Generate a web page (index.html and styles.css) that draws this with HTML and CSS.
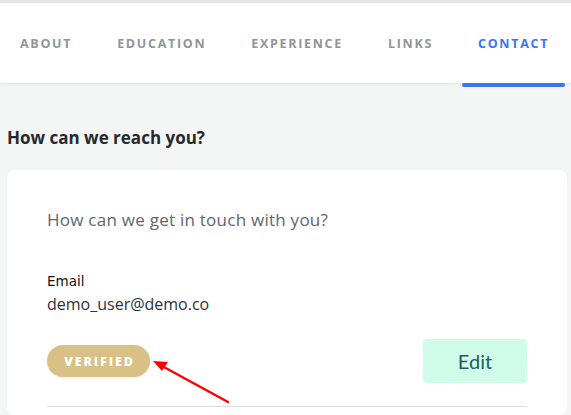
FILE: index.html
```html
<!DOCTYPE html>
<html lang="en">
<head>
<meta charset="utf-8">
<title>Contact</title>
<link rel="stylesheet" href="styles.css">
</head>
<body>
<div class="topstrip"></div>
<nav class="tabs">
  <a class="tab">ABOUT</a>
  <a class="tab">EDUCATION</a>
  <a class="tab">EXPERIENCE</a>
  <a class="tab">LINKS</a>
  <a class="tab active">CONTACT</a>
</nav>
<main class="content">
  <h2 class="title">How can we reach you?</h2>
  <section class="card">
    <p class="lead">How can we get in touch with you?</p>
    <div class="field">
      <div class="label">Email</div>
      <div class="value">demo_user@demo.co</div>
    </div>
    <div class="actions">
      <span class="badge">VERIFIED</span>
      <button class="edit">Edit</button>
    </div>
    <hr class="sep">
  </section>
</main>
<svg class="arrow" width="571" height="415" viewBox="0 0 571 415">
  <line x1="228" y1="402" x2="162" y2="366" stroke="#f00" stroke-width="2.5" stroke-linecap="round"/>
  <polygon points="153,361 168,362 162,371" fill="#f00"/>
</svg>
</body>
</html>
```

FILE: styles.css
```css
* { box-sizing: border-box; }
html, body { margin: 0; padding: 0; }
body {
  background: #f4f5f5;
  font-family: "Open Sans", "Lato", sans-serif;
  width: 571px;
  height: 415px;
  overflow: hidden;
  position: relative;
}
.topstrip { height: 3px; background: #e6e7e7; }
.tabs {
  display: flex;
  gap: 13px;
  height: 80px;
  padding-left: 4px;
  background: #fff;
  box-shadow: 0 1px 3px rgba(0,0,0,0.08);
  position: relative;
  z-index: 1;
}
.tab {
  display: flex;
  align-items: center;
  padding: 0 16px;
  font-family: "Open Sans", sans-serif;
  font-weight: 700;
  font-size: 12.5px;
  letter-spacing: 1.7px;
  color: #8e959a;
  position: relative;
}
.tab.active { color: #3b74f4; }
.tab.active::after {
  content: "";
  position: absolute;
  left: 0; right: 0;
  bottom: -4px;
  height: 4px;
  border-radius: 2px;
  background: #3b74f4;
}
.content { padding: 0 4px 0 7px; }
.title {
  margin: 44px 0 0;
  font-size: 17px;
  font-weight: 700;
  color: #26292e;
  line-height: 22px;
}
.card {
  margin-top: 21px;
  background: #fff;
  border-radius: 8px;
  padding: 38px 40px 0;
  height: 245px;
}
.lead {
  margin: 0;
  font-size: 17px;
  letter-spacing: 0.25px;
  line-height: 24px;
  color: #5e6572;
}
.field { margin-top: 39px; }
.label {
  font-family: "DejaVu Sans", sans-serif;
  font-size: 13.5px;
  color: #111;
  line-height: 20px;
}
.value {
  font-size: 16px;
  color: #2a3140;
  line-height: 22px;
  margin-top: 2px;
}
.actions {
  margin-top: 24px;
  display: flex;
  justify-content: space-between;
  align-items: center;
}
.badge {
  display: inline-flex;
  align-items: center;
  justify-content: center;
  width: 103px;
  height: 32px;
  border-radius: 16px;
  background: #d9c086;
  color: #fff;
  font-family: "Open Sans", sans-serif;
  font-weight: 800;
  font-size: 12.5px;
  letter-spacing: 1.9px;
  padding-left: 2px;
  box-shadow: 0 1px 2px rgba(0,0,0,0.08);
}
.edit {
  width: 104px;
  height: 44px;
  border: 0;
  border-radius: 4px;
  background: #d1fbe9;
  color: #1d5d5b;
  font-family: "Lato", sans-serif;
  font-size: 20px;
  cursor: pointer;
}
.sep {
  margin: 23px 0 0;
  border: 0;
  border-top: 1px solid #dcdcdc;
}
.arrow {
  position: absolute;
  left: 0; top: 0;
  pointer-events: none;
  z-index: 2;
}
```
